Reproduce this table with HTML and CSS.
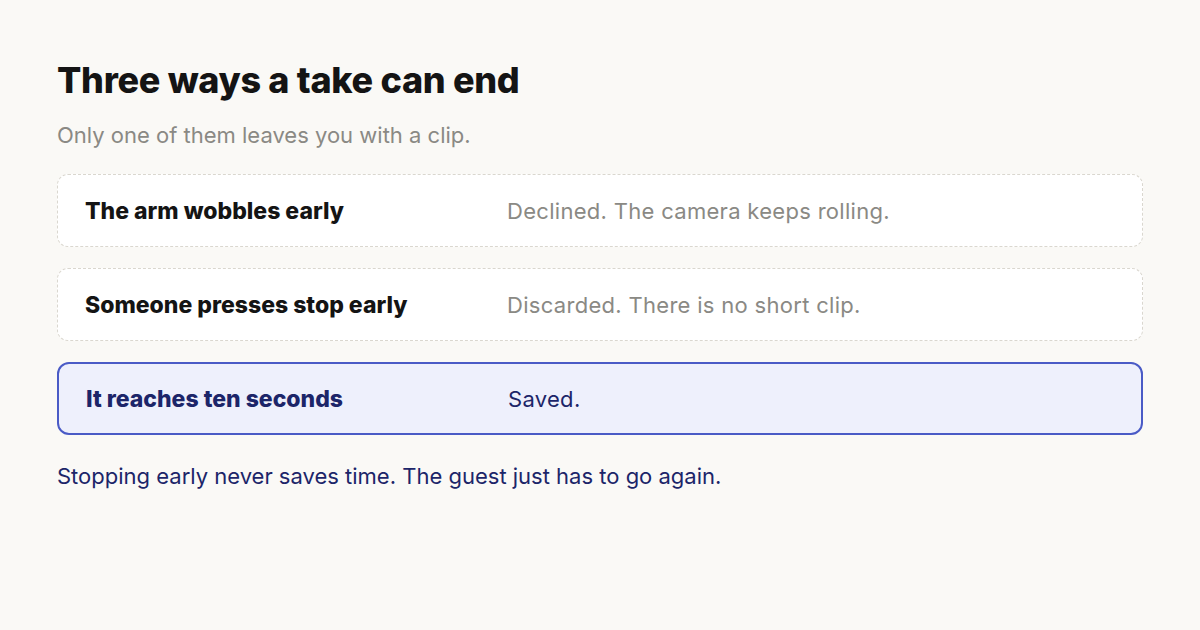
FILE: index.html
```html
<!DOCTYPE html>
<html lang="en">
<head>
<meta charset="utf-8">
<link rel="stylesheet" href="styles.css">
</head>
<body>
<main class="page">
  <h1 class="title">Three ways a take can end</h1>
  <p class="subtitle">Only one of them leaves you with a clip.</p>
  <div class="list">
    <div class="row">
      <div class="cause">The arm wobbles early</div>
      <div class="result">Declined. The camera keeps rolling.</div>
    </div>
    <div class="row">
      <div class="cause">Someone presses stop early</div>
      <div class="result">Discarded. There is no short clip.</div>
    </div>
    <div class="row row-ok">
      <div class="cause">It reaches ten seconds</div>
      <div class="result">Saved.</div>
    </div>
  </div>
  <p class="note">Stopping early never saves time. The guest just has to go again.</p>
</main>
</body>
</html>
```

FILE: styles.css
```css
* { box-sizing: border-box; }
html, body { margin: 0; padding: 0; }
body {
  width: 1200px;
  height: 630px;
  background: #faf9f6;
  font-family: "Inter", "Noto Sans", sans-serif;
  color: #141414;
}
.page {
  padding: 58px 57px 0 57px;
}
.title {
  margin: 0;
  font-size: 36px;
  font-weight: 800;
  line-height: 44px;
  letter-spacing: -0.3px;
}
.subtitle {
  margin: 20px 0 0 0;
  font-size: 22px;
  line-height: 26px;
  color: #8a8984;
}
.list {
  margin-top: 26px;
  display: flex;
  flex-direction: column;
  gap: 21px;
}
.row {
  height: 73px;
  display: grid;
  grid-template-columns: 422px 1fr;
  align-items: center;
  padding: 0 27px;
  background: #ffffff;
  border: 1.5px dashed #dad7cf;
  border-radius: 11px;
}
.cause {
  font-size: 23px;
  font-weight: 800;
  letter-spacing: 0;
  color: #141414;
}
.result {
  font-size: 22px;
  letter-spacing: 0.3px;
  color: #8a8984;
}
.row-ok {
  background: #eef0fc;
  border: 2px solid #4a5bc6;
  border-radius: 12px;
}
.row-ok .cause { color: #1c2569; }
.row-ok .result { color: #1c2569; }
.note {
  margin: 28px 0 0 0;
  font-size: 22px;
  line-height: 26px;
  color: #1c2569;
}
```
